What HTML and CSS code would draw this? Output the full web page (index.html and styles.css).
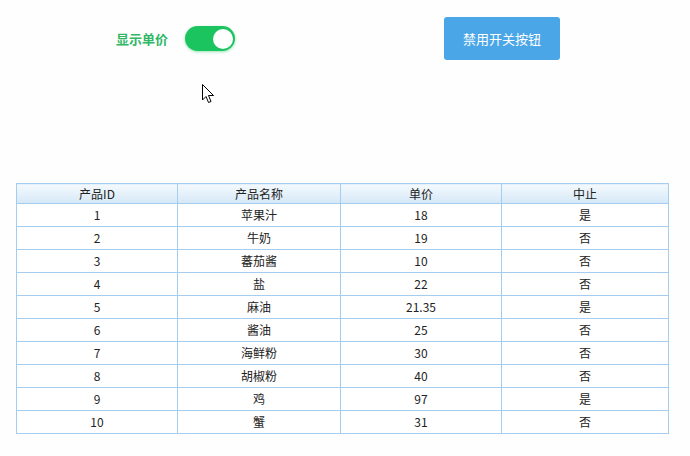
FILE: index.html
```html
<!DOCTYPE html>
<html>
<head>
<meta charset="utf-8">
<link rel="stylesheet" href="styles.css">
</head>
<body>
<div class="page">
  <div class="toolbar">
    <div class="switch-group">
      <span class="switch-label">显示单价</span>
      <span class="switch"><span class="knob"></span></span>
    </div>
    <button class="btn">禁用开关按钮</button>
  </div>
  <table class="grid">
    <colgroup>
      <col class="c1"><col class="c2"><col class="c3"><col class="c4">
    </colgroup>
    <thead>
      <tr><th>产品ID</th><th>产品名称</th><th>单价</th><th>中止</th></tr>
    </thead>
    <tbody>
      <tr><td>1</td><td>苹果汁</td><td>18</td><td>是</td></tr>
      <tr><td>2</td><td>牛奶</td><td>19</td><td>否</td></tr>
      <tr><td>3</td><td>蕃茄酱</td><td>10</td><td>否</td></tr>
      <tr><td>4</td><td>盐</td><td>22</td><td>否</td></tr>
      <tr><td>5</td><td>麻油</td><td>21.35</td><td>是</td></tr>
      <tr><td>6</td><td>酱油</td><td>25</td><td>否</td></tr>
      <tr><td>7</td><td>海鲜粉</td><td>30</td><td>否</td></tr>
      <tr><td>8</td><td>胡椒粉</td><td>40</td><td>否</td></tr>
      <tr><td>9</td><td>鸡</td><td>97</td><td>是</td></tr>
      <tr><td>10</td><td>蟹</td><td>31</td><td>否</td></tr>
    </tbody>
  </table>
  <svg class="cursor" width="13" height="20" viewBox="0 0 13 20"><path d="M0.5 0.5 L0.5 16 L4 12.5 L6.5 18.5 L9 17.5 L6.5 11.5 L11.5 11.5 Z" fill="#fff" stroke="#000" stroke-width="1" stroke-linejoin="miter"/></svg>
</div>
</body>
</html>
```
FILE: styles.css
```css
html, body {
  margin: 0;
  padding: 0;
  background: #fefefe;
}
.page {
  position: relative;
  width: 690px;
  height: 456px;
  font-family: "Microsoft YaHei", "Noto Sans CJK SC", "Liberation Sans", sans-serif;
}
.toolbar {
  display: flex;
  align-items: flex-start;
  padding: 17px 0 0 116px;
  height: 183px;
  box-sizing: border-box;
}
.switch-group {
  display: flex;
  align-items: center;
  margin-top: 9px;
  gap: 17px;
}
.switch-label {
  font-size: 13px;
  font-weight: bold;
  color: #2fb765;
}
.switch {
  display: flex;
  align-items: center;
  justify-content: flex-end;
  width: 50px;
  height: 25px;
  border-radius: 13px;
  background: #1bc45f;
  box-shadow: 0 1px 3px rgba(27, 196, 95, 0.45);
  padding: 0 2px;
  box-sizing: border-box;
}
.knob {
  width: 20px;
  height: 20px;
  border-radius: 50%;
  background: #fff;
}
.btn {
  margin-left: 209px;
  width: 116px;
  height: 43px;
  border: none;
  border-radius: 3px;
  background: #4aa6e7;
  color: #fff;
  font-family: inherit;
  font-size: 13px;
  padding: 0;
}
.grid {
  margin-left: 16px;
  width: 652px;
  border-collapse: collapse;
  table-layout: fixed;
  font-size: 12px;
  color: #222;
}
.c1 { width: 161px; }
.c2 { width: 163px; }
.c3 { width: 161px; }
.c4 { width: 167px; }
.grid th, .grid td {
  border: 1px solid #a4cdf0;
  text-align: center;
  padding: 0;
}
.grid th {
  height: 19px;
  font-weight: normal;
  background: linear-gradient(#f4f9fd, #d5e8f7);
  line-height: 18px;
}
.grid td {
  height: 22px;
  line-height: 22px;
  background: #fff;
}
.cursor {
  position: absolute;
  left: 202px;
  top: 84px;
}
```
